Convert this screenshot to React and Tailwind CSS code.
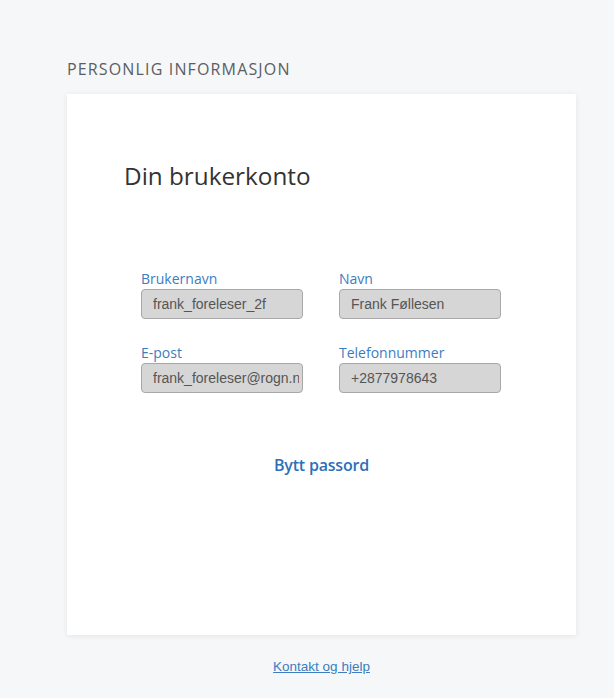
export default function App() {
  const Field = ({ label, value }) => (
    <div className="flex flex-col w-[162px]">
      <label className="text-[14px] leading-[18px] text-[#3b7dc0]" style={{ fontFamily: '"Open Sans", sans-serif' }}>{label}</label>
      <input
        readOnly
        value={value}
        className="mt-[1px] h-[30px] w-[162px] rounded-[4px] border border-[#a8a8a8] bg-[#d6d6d6] pl-[11px] pr-[3px] text-[14px] text-[#555] outline-none"
        style={{ fontFamily: '"Liberation Sans", Arial, sans-serif' }}
      />
    </div>
  );
  return (
    <div className="min-h-[698px] w-full bg-[#f6f7f9] flex flex-col" style={{ fontFamily: '"Open Sans", sans-serif' }}>
      <div className="w-[509px] ml-[67px] pt-[58px]">
        <h2 className="text-[16px] leading-[22px] tracking-[1.15px] text-[#5a5e63] uppercase">Personlig informasjon</h2>
        <div className="mt-[14px] h-[541px] bg-white shadow-[0_1px_6px_rgba(0,0,0,0.08)] flex flex-col">
          <h1 className="pl-[57px] pt-[65px] text-[24.3px] leading-[34px] text-[#333]">Din brukerkonto</h1>
          <div className="mt-[77px] pl-[74px] grid grid-cols-[162px_162px] gap-x-[36px] gap-y-[25px]">
            <Field label="Brukernavn" value="frank_foreleser_2f" />
            <Field label="Navn" value="Frank Føllesen" />
            <Field label="E-post" value="frank_foreleser@rogn.no" />
            <Field label="Telefonnummer" value="+2877978643" />
          </div>
          <div className="mt-[60px] flex justify-center">
            <a href="#" className="text-[16px] font-semibold text-[#2f6fb5] tracking-[-0.2px]">Bytt passord</a>
          </div>
        </div>
        <div className="mt-[22px] flex justify-center">
          <a href="#" className="text-[13.5px] text-[#3b7dc0] underline" style={{ fontFamily: '"Liberation Sans", Arial, sans-serif' }}>Kontakt og hjelp</a>
        </div>
      </div>
    </div>
  );
}
